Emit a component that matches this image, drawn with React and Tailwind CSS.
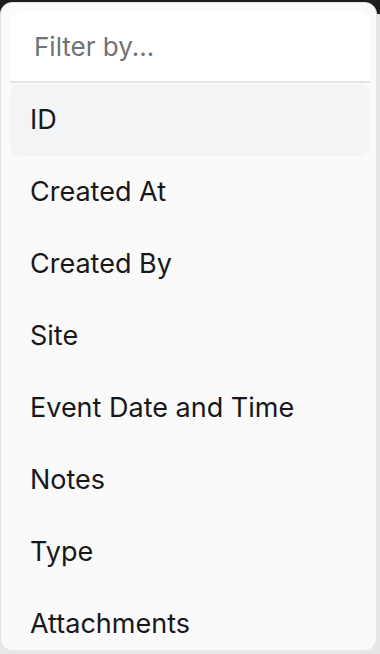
const fields = [
  'ID',
  'Created At',
  'Created By',
  'Site',
  'Event Date and Time',
  'Notes',
  'Type',
  'Attachments',
];

export default function App() {
  return (
    <div className="h-[654px] w-[380px] overflow-hidden bg-[linear-gradient(#1d1d1f_0_14px,#e7e7e9_14px)] pt-[2px] font-['Inter',sans-serif]">
      <div className="flex h-[649px] w-[377px] flex-col overflow-hidden rounded-[12px] border border-[#e4e4e7] bg-[#fafafa] pl-[9px] pr-[6px] pt-[9px]">
        <div className="flex h-[71px] shrink-0 items-center rounded-t-[10px] border-b-2 border-[#e4e4e7] bg-white px-[24px]">
          <input
            placeholder="Filter by..."
            className="w-full bg-transparent text-[26px] text-[#18181b] outline-none placeholder:text-[#71717a]"
          />
        </div>
        <ul className="flex flex-col pt-[1px]">
          {fields.map((f, i) => (
            <li
              key={f}
              className={
                'flex h-[72px] shrink-0 items-center rounded-[10px] px-[20px] pt-[1px] text-[27px] text-[#18181b] ' +
                (i === 0 ? 'bg-[#f3f4f6]' : '')
              }
            >
              {f}
            </li>
          ))}
        </ul>
      </div>
    </div>
  );
}
